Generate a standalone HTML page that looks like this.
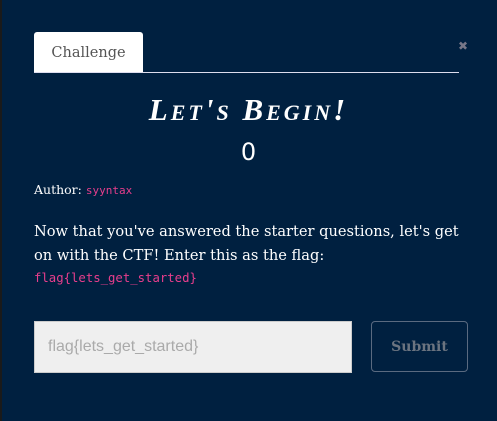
<!DOCTYPE html>
<html><head><style>
body{margin:0;width:497px;height:421px;background:#002040;position:relative;overflow:hidden;font-family:"DejaVu Serif",serif;}
.edge{position:absolute;left:0;top:0;width:2px;height:421px;background:#1a1a1a}
.tab{position:absolute;left:34px;top:32px;width:109px;height:41px;background:#fff;border-radius:3px 3px 0 0;color:#555;font-size:14.5px;line-height:42px;text-align:center}
.line{position:absolute;left:34px;top:72px;width:425px;height:1px;background:#dde}
.x{position:absolute;left:458px;top:39px;color:#778;font-size:12px;font-weight:bold;font-family:"DejaVu Sans",sans-serif}
.title{position:absolute;left:0;width:497px;top:92px;text-align:center;color:#fff;font-family:"Liberation Serif",serif;font-size:31px;font-weight:bold;font-style:italic;font-variant:small-caps;letter-spacing:3px;line-height:36px}
.zero{position:absolute;left:0;width:497px;top:137px;text-align:center;color:#fff;font-family:"DejaVu Sans",sans-serif;font-size:24px;line-height:30px}
.author{position:absolute;left:34px;top:182px;color:#fff;font-size:12.5px}
.author span{color:#e83e8c;font-family:"DejaVu Sans Mono",monospace;font-size:11px}
.p{position:absolute;left:34px;top:220px;width:432px;color:#fff;font-size:14.6px;line-height:24px}
.flag{position:absolute;left:34px;top:271px;color:#e83e8c;font-family:"DejaVu Sans Mono",monospace;font-size:12.3px}
.inp{position:absolute;left:34px;top:321px;width:318px;height:52px;background:#efefef;border:1px solid #ccc;box-sizing:border-box;color:#aaa;font-family:"Liberation Sans",sans-serif;font-size:16px;line-height:50px;padding-left:13px}
.btn{position:absolute;left:371px;top:321px;width:97px;height:51px;border:1px solid #5a6a80;border-radius:4px;box-sizing:border-box;color:#6b7480;font-weight:bold;font-size:14px;text-align:center;line-height:50px}
</style></head><body>
<div class="edge"></div>
<div class="tab">Challenge</div>
<div class="line"></div>
<div class="x">✖</div>
<div class="title">Let's Begin!</div>
<div class="zero">0</div>
<div class="author">Author: <span>syyntax</span></div>
<div class="p">Now that you've answered the starter questions, let's get on with the CTF! Enter this as the flag:</div>
<div class="flag">flag{lets_get_started}</div>
<div class="inp">flag{lets_get_started}</div>
<div class="btn">Submit</div>
</body></html>
